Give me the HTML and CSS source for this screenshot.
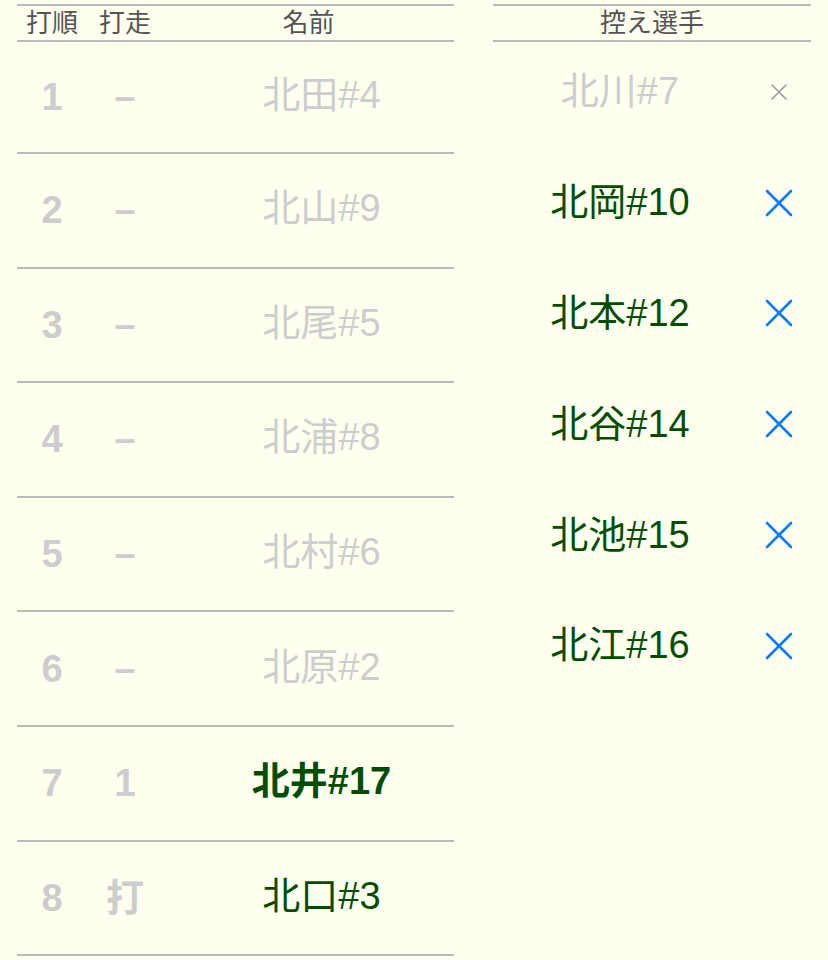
FILE: index.html
```html
<!DOCTYPE html>
<html lang="ja">
<head>
  <meta charset="UTF-8">
  <meta name="viewport" content="width=device-width, initial-scale=1.0">
  <title>打順</title>
  <link rel="stylesheet" href="styles.css">
</head>
<body>

<div class="page">

  <!-- 打順 -->
  <div class="lineup">
    <div class="lineup-head">
      <div class="col-order">打順</div>
      <div class="col-runner">打走</div>
      <div class="col-name-head">名前</div>
    </div>

    <div class="lineup-row used">
      <div class="col-order">1</div>
      <div class="col-runner">–</div>
      <div class="col-name">北田#4</div>
    </div>
    <div class="lineup-row used">
      <div class="col-order">2</div>
      <div class="col-runner">–</div>
      <div class="col-name">北山#9</div>
    </div>
    <div class="lineup-row used">
      <div class="col-order">3</div>
      <div class="col-runner">–</div>
      <div class="col-name">北尾#5</div>
    </div>
    <div class="lineup-row used">
      <div class="col-order">4</div>
      <div class="col-runner">–</div>
      <div class="col-name">北浦#8</div>
    </div>
    <div class="lineup-row used">
      <div class="col-order">5</div>
      <div class="col-runner">–</div>
      <div class="col-name">北村#6</div>
    </div>
    <div class="lineup-row used">
      <div class="col-order">6</div>
      <div class="col-runner">–</div>
      <div class="col-name">北原#2</div>
    </div>
    <div class="lineup-row current">
      <div class="col-order">7</div>
      <div class="col-runner">1</div>
      <div class="col-name">北井#17</div>
    </div>
    <div class="lineup-row">
      <div class="col-order">8</div>
      <div class="col-runner">打</div>
      <div class="col-name">北口#3</div>
    </div>
  </div>

  <!-- 控え選手 -->
  <div class="bench">
    <div class="bench-head">控え選手</div>

    <div class="bench-list">
      <div class="bench-row used">
        <div class="bench-name">北川#7</div>
        <div class="bench-x">
          <svg width="18" height="18" viewBox="0 0 18 18"><path d="M2 2 L16 16 M16 2 L2 16" stroke="#9c9c9c" stroke-width="1.6" stroke-linecap="round"/></svg>
        </div>
      </div>
      <div class="bench-row">
        <div class="bench-name">北岡#10</div>
        <div class="bench-x">
          <svg width="28" height="28" viewBox="0 0 28 28"><path d="M2 2 L26 26 M26 2 L2 26" stroke="#0a7aff" stroke-width="2.6" stroke-linecap="round"/></svg>
        </div>
      </div>
      <div class="bench-row">
        <div class="bench-name">北本#12</div>
        <div class="bench-x">
          <svg width="28" height="28" viewBox="0 0 28 28"><path d="M2 2 L26 26 M26 2 L2 26" stroke="#0a7aff" stroke-width="2.6" stroke-linecap="round"/></svg>
        </div>
      </div>
      <div class="bench-row">
        <div class="bench-name">北谷#14</div>
        <div class="bench-x">
          <svg width="28" height="28" viewBox="0 0 28 28"><path d="M2 2 L26 26 M26 2 L2 26" stroke="#0a7aff" stroke-width="2.6" stroke-linecap="round"/></svg>
        </div>
      </div>
      <div class="bench-row">
        <div class="bench-name">北池#15</div>
        <div class="bench-x">
          <svg width="28" height="28" viewBox="0 0 28 28"><path d="M2 2 L26 26 M26 2 L2 26" stroke="#0a7aff" stroke-width="2.6" stroke-linecap="round"/></svg>
        </div>
      </div>
      <div class="bench-row">
        <div class="bench-name">北江#16</div>
        <div class="bench-x">
          <svg width="28" height="28" viewBox="0 0 28 28"><path d="M2 2 L26 26 M26 2 L2 26" stroke="#0a7aff" stroke-width="2.6" stroke-linecap="round"/></svg>
        </div>
      </div>
    </div>
  </div>

</div>

</body>
</html>
```

FILE: styles.css
```css
body {
  font-family: "Liberation Sans", "Noto Sans CJK JP", sans-serif;
  background-color: #fffff0;
  margin: 0;
  padding: 0;
}

.page {
  display: flex;
  gap: 39px;
  padding: 4px 17px 0 17px;
}

/* 打順 */
.lineup {
  width: 437px;
}

.lineup-head,
.lineup-row {
  display: flex;
  align-items: center;
}

.lineup-head {
  height: 34px;
  border-top: 2px solid #bababa;
  border-bottom: 2px solid #bababa;
  font-size: 26px;
  line-height: 34px;
  color: #555;
}

.lineup-row {
  height: 112.6px;
  border-bottom: 2px solid #bababa;
  font-size: 38px;
  line-height: 40px;
  color: #004d00;
}

.lineup-row:nth-child(2) {
  height: 110px;
}

.col-order {
  width: 70px;
  text-align: center;
}

.col-runner {
  width: 76px;
  text-align: center;
}

.col-name-head {
  flex: 1;
  text-align: center;
}

.col-name {
  flex: 1;
  text-align: center;
  padding-left: 26px;
  padding-bottom: 4px;
}

.lineup-row .col-order,
.lineup-row .col-runner {
  font-weight: bold;
  color: #cdcdcd;
}

.lineup-row.used .col-name {
  color: #cdcdcd;
}

.lineup-row.current .col-name {
  font-weight: bold;
}

/* 控え選手 */
.bench {
  width: 318px;
}

.bench-head {
  height: 34px;
  border-top: 2px solid #bababa;
  border-bottom: 2px solid #bababa;
  font-size: 26px;
  line-height: 34px;
  color: #555;
  text-align: center;
}

.bench-list {
  margin-top: -4px;
}

.bench-row {
  display: flex;
  align-items: center;
  height: 110.8px;
  font-size: 38px;
  line-height: 40px;
  color: #004d00;
}

.bench-row.used {
  color: #cdcdcd;
}

.bench-name {
  width: 254px;
  text-align: center;
  padding-bottom: 4px;
}

.bench-x {
  flex: 1;
  display: flex;
  justify-content: center;
  align-items: center;
  padding-bottom: 3px;
}

.bench-x svg {
  display: block;
}
```
